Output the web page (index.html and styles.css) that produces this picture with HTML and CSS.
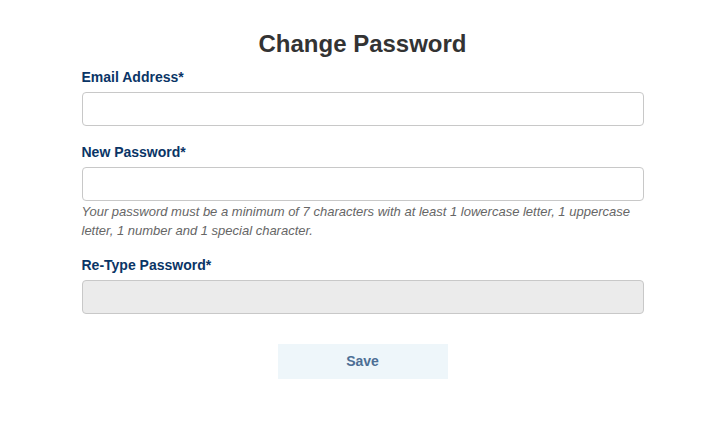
FILE: index.html
```html
<!DOCTYPE html>
<html lang="en">
<head>
  <meta charset="UTF-8" />
  <meta name="viewport" content="width=device-width, initial-scale=1.0"/>
  <title>Change Password</title>
  <link rel="stylesheet" href="styles.css">
</head>
<body>
  <section class="change-password">
    <h1>Change Password</h1>

    <form class="pw-form" onsubmit="return false;">
      <div class="field">
        <label for="email">Email Address*</label>
        <input type="email" id="email">
      </div>

      <div class="field">
        <label for="new-pw">New Password*</label>
        <input type="password" id="new-pw">
        <p class="help">Your password must be a minimum of 7 characters with at least 1 lowercase letter, 1 uppercase letter, 1 number and 1 special character.</p>
      </div>

      <div class="field">
        <label for="retype-pw">Re-Type Password*</label>
        <input type="password" id="retype-pw" disabled>
      </div>

      <div class="actions">
        <button type="submit" class="save">Save</button>
      </div>
    </form>
  </section>
</body>
</html>
```

FILE: styles.css
```css
* {
  margin: 0;
  padding: 0;
  box-sizing: border-box;
  font-family: 'Liberation Sans', Arial, Helvetica, sans-serif;
}

body {
  background: #fff;
  color: #333;
  padding: 30px 0 0 10px;
}

.change-password {
  width: 562px;
  margin: 0 auto;
}

.change-password h1 {
  font-size: 24px;
  line-height: 1.2;
  text-align: center;
  color: #333;
  margin-bottom: 8px;
}

.field {
  margin-bottom: 16px;
}

.field label {
  display: block;
  font-size: 14px;
  line-height: 20px;
  font-weight: bold;
  color: #0a3566;
  margin-bottom: 5px;
}

.field input {
  display: block;
  width: 100%;
  height: 34px;
  border: 1px solid #c8c8c8;
  border-radius: 4px;
  background: #fff;
  padding: 6px 12px;
  font-size: 14px;
}

.field input:disabled {
  background: #ebebeb;
}

.help {
  margin-top: 1px;
  font-size: 13px;
  line-height: 19px;
  font-style: italic;
  color: #666;
}

.field:has(.help) {
  margin-bottom: 15px;
}

.field:last-of-type {
  margin-bottom: 0;
}

.actions {
  margin-top: 30px;
  text-align: center;
}

.save {
  width: 170px;
  height: 35px;
  border: none;
  background: #eef6fa;
  color: #4d6f95;
  font-size: 14px;
  font-weight: bold;
  cursor: pointer;
}
```
